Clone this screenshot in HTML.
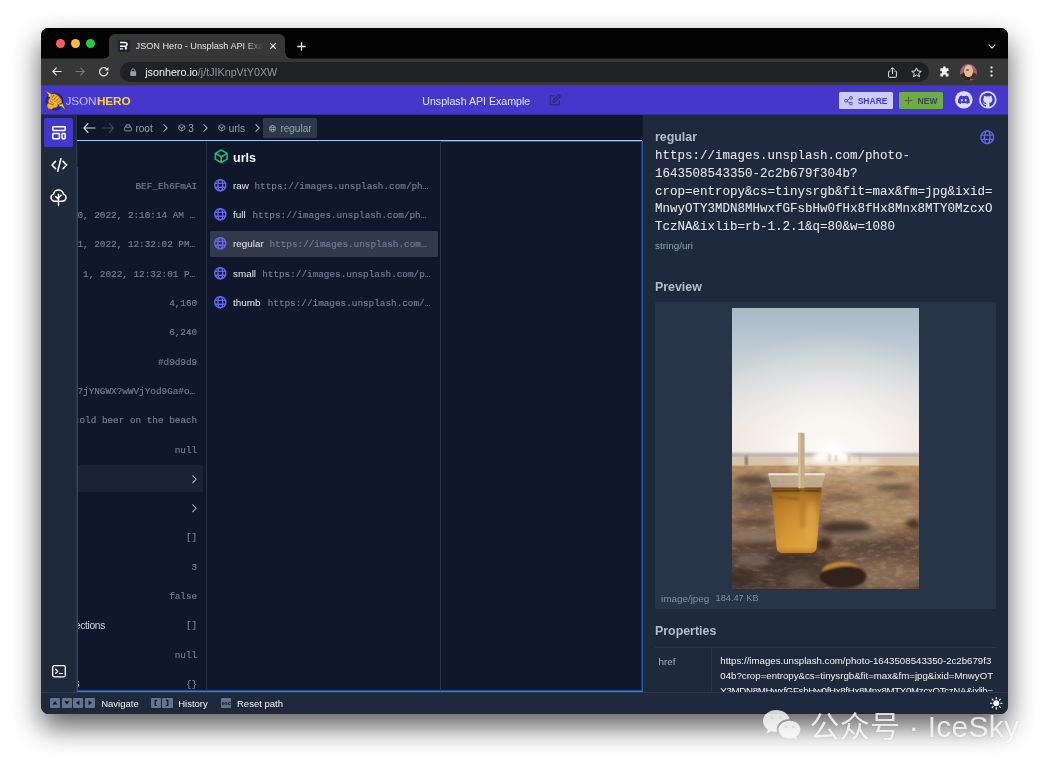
<!DOCTYPE html>
<html lang="en">
<head>
<meta charset="utf-8">
<title>JSON Hero - Unsplash API Example</title>
<style>
*{box-sizing:border-box;margin:0;padding:0}
html,body{width:1049px;height:768px;overflow:hidden;background:#fff}
body{position:relative;font-family:"Liberation Sans",sans-serif}
div,span{position:absolute}
span.i{position:static}
svg{display:block;overflow:visible;position:absolute}
#shadow{left:41px;top:28px;width:967px;height:685.8px;border-radius:7.5px;
 box-shadow:0 13px 28px rgba(0,0,0,.64)}
#win{left:41px;top:28px;width:967px;height:686px;border-radius:7.5px;overflow:hidden;background:#0f172a;will-change:transform}
#c{left:-41px;top:-28px;width:1049px;height:768px}
.t{white-space:pre;line-height:1}
.m{font-family:"Liberation Mono",monospace;-webkit-text-stroke:0.16px}
.b{font-weight:bold}
</style>
</head>
<body>
<div id="shadow"></div>
<div id="win"><div id="c">
<div style="left:41px;top:28px;width:967px;height:31px;background:#030303;"></div>
<div style="left:56.2px;top:39px;width:9px;height:9.1px;background:#fc5f57;border-radius:50%"></div>
<div style="left:70.9px;top:39px;width:9px;height:9.1px;background:#f5bd38;border-radius:50%"></div>
<div style="left:85.7px;top:39px;width:9px;height:9.1px;background:#2ac840;border-radius:50%"></div>
<div style="left:109px;top:33.5px;width:176px;height:26px;background:#373737;border-radius:6px 6px 0 0"></div>
<div style="left:118.2px;top:40.4px;width:11.4px;height:11.2px;background:#1f2431;border-radius:1.5px"></div>
<svg style="left:118.2px;top:40.4px;" width="11.4" height="11.2" viewBox="0 0 11.4 11.2"><path d="M2 2.5h5.1a1.85 1.85 0 0 1 0 3.7H2" stroke="#fff" stroke-width="1.5" fill="none"/><path d="M7.85 6.4v3.1" stroke="#fff" stroke-width="1.9" fill="none"/><path d="M2 8.95h2.9" stroke="#fff" stroke-width="1.3" fill="none"/></svg>
<div class="t " style="left:135.6px;top:42.1px;font-size:9.15px;color:#e3e3e3;width:129px;overflow:hidden;-webkit-mask-image:linear-gradient(90deg,#000 108px,transparent 128px);mask-image:linear-gradient(90deg,#000 108px,transparent 128px)">JSON Hero - Unsplash API Example</div>
<svg style="left:269.3px;top:42px;" width="8" height="8" viewBox="0 0 8 8"><path d="M1.2 1.2l5.6 5.6M6.8 1.2L1.2 6.8" stroke="#e8e8e8" stroke-width="1.15" fill="none"/></svg>
<svg style="left:296.5px;top:41.5px;" width="9" height="9" viewBox="0 0 9 9"><path d="M4.5 0.3v8.4M0.3 4.5h8.4" stroke="#f0f0f0" stroke-width="1.3" fill="none"/></svg>
<svg style="left:988px;top:43.5px;" width="8" height="5" viewBox="0 0 8 5"><path d="M0.7 0.7l3.3 3.3 3.3-3.3" stroke="#f0f0f0" stroke-width="1.2" fill="none"/></svg>
<div style="left:41px;top:58px;width:967px;height:28px;background:linear-gradient(#191919 0,#191919 1px,#373737 1px,#373737 27px,#3e388f 27px);"></div>
<div style="left:109px;top:58px;width:176px;height:1px;background:#373737;"></div>
<div style="left:103.5px;top:53px;width:5.5px;height:5.5px;background:radial-gradient(circle at 0 0,rgba(0,0,0,0) 5.1px,#373737 5.7px);"></div>
<div style="left:285px;top:53px;width:5.5px;height:5.5px;background:radial-gradient(circle at 100% 0,rgba(0,0,0,0) 5.1px,#373737 5.7px);"></div>
<svg style="left:51.7px;top:67.3px;" width="10" height="9" viewBox="0 0 10 9"><path d="M4.6 0.6L0.8 4.5l3.8 3.9M0.9 4.5h8.6" stroke="#e4e4e4" stroke-width="1.15" fill="none"/></svg>
<svg style="left:75px;top:67.3px;" width="10" height="9" viewBox="0 0 10 9"><path d="M5.4 0.6l3.8 3.9-3.8 3.9M9.1 4.5H0.5" stroke="#77787b" stroke-width="1.15" fill="none"/></svg>
<svg style="left:98.3px;top:66px;" width="11.6" height="11.6" viewBox="0 0 11 11"><path d="M9.3 5.6A3.9 3.9 0 1 1 8.2 2.7" stroke="#e4e4e4" stroke-width="1.2" fill="none"/><path d="M9.9 0.9v3.3H6.6z" fill="#e4e4e4"/></svg>
<div style="left:120px;top:62px;width:809px;height:20px;background:#202124;border-radius:10px"></div>
<svg style="left:129.8px;top:67.6px;" width="6.4" height="8.4" viewBox="0 0 7 9"><rect x="0.3" y="3.6" width="6.4" height="5.1" rx="0.8" fill="#9aa0a6"/><path d="M1.7 3.8V2.6a1.8 1.8 0 0 1 3.6 0v1.2" stroke="#9aa0a6" stroke-width="1" fill="none"/></svg>
<div class="t " style="left:145.2px;top:66.7px;font-size:10.75px;color:#f1f3f4;">jsonhero.io<span class="i" style="color:#92969b">/j/tJIKnpVtY0XW</span></div>
<svg style="left:887.5px;top:66.5px;" width="9" height="11" viewBox="0 0 9 11"><path d="M2.6 4.1H1.2a.6.6 0 0 0-.6.6v5a.6.6 0 0 0 .6.6h6.6a.6.6 0 0 0 .6-.6v-5a.6.6 0 0 0-.6-.6H6.4M4.5 7V0.9M2.6 2.6l1.9-1.9 1.9 1.9" stroke="#e4e4e4" stroke-width="1" fill="none"/></svg>
<svg style="left:910.5px;top:66.5px;" width="11" height="11" viewBox="0 0 11 11"><path d="M5.5 0.9l1.4 3.1 3.4.3-2.6 2.2.8 3.3-3-1.8-3 1.8.8-3.3L.7 4.3l3.4-.3z" stroke="#e4e4e4" stroke-width="1" fill="none" stroke-linejoin="round"/></svg>
<svg style="left:938.6px;top:66.3px;" width="11" height="11" viewBox="0 0 11 11"><path d="M4.1 1.6a1.3 1.3 0 0 1 2.6 0V2.2h2.2a.6.6 0 0 1 .6.6V4.9h-.6a1.35 1.35 0 0 0 0 2.7h.6v2.2a.6.6 0 0 1-.6.6H6.8v-.6a1.35 1.35 0 0 0-2.7 0v.6H1.9a.6.6 0 0 1-.6-.6V7.6h.6a1.35 1.35 0 0 0 0-2.7h-.6V2.8a.6.6 0 0 1 .6-.6h2.2z" fill="#f1f1f1"/></svg>
<div style="left:959.8px;top:63.5px;width:17.2px;height:17.2px;background:#9c5f86;border-radius:50%;overflow:hidden"><div style="left:-1px;top:9.5px;width:9.5px;height:10px;border-radius:60% 40% 0 0;background:#3d2620;transform:rotate(-18deg)"></div><div style="left:10.5px;top:9px;width:7px;height:6px;border-radius:40% 60% 50% 0;background:#4a2e26"></div><div style="left:4.6px;top:1.6px;width:8.2px;height:12.4px;border-radius:48% 48% 46% 46%;background:#e0b98c"></div><div style="left:6.6px;top:5.3px;width:3px;height:2.6px;border-radius:50%;background:#6b4a3c;opacity:.8"></div><div style="left:7.2px;top:13px;width:3.4px;height:3.6px;border-radius:40%;background:#2a1a1c"></div></div>
<svg style="left:990px;top:66.2px;" width="3" height="11" viewBox="0 0 3 11"><rect x="0.45" y="0.4" width="2.1" height="2.1" rx="0.7" fill="#f2f2f2"/><rect x="0.45" y="4.45" width="2.1" height="2.1" rx="0.7" fill="#f2f2f2"/><rect x="0.45" y="8.5" width="2.1" height="2.1" rx="0.7" fill="#f2f2f2"/></svg>
<div style="left:41px;top:86px;width:967px;height:29px;background:linear-gradient(#4338ca 0,#4338ca 28px,#332f9a 28px);"></div>
<svg style="left:42px;top:86px;" width="30" height="30" viewBox="0 0 30 30"><circle cx="12.5" cy="15.5" r="8.5" fill="#342c9e" stroke="#23207a" stroke-width="1.1"/><path d="M3 3.7L8.3 7.5l1.7.2-.3 4.2-3.8-1.4.7-1.4z" fill="#f8cf2e" stroke="#2a2470" stroke-width="0.5" stroke-linejoin="round"/><path d="M23.9 24.7L20.4 17l-1.7 1.6-1.7-1.4.2 3.5 2.4-.2z" fill="#f8cf2e" stroke="#2a2470" stroke-width="0.5" stroke-linejoin="round"/><path d="M10.2 8.3l2.7-.3 3.6 2.3 3 4.2v2l-3.9 2.3-.4 1.9-4.3 1.2-1.5 1.5-3.5-1.5-.9-3.1 1.9-1.6-.4-2.7 1.2-2z" fill="#f4b52e" stroke="#d0881c" stroke-width="0.6" stroke-linejoin="round"/><path d="M9.6 12.2l2.5-3.1M11.6 14l2.9-3.4M13.6 15.6l2.9-3M15.5 17.1l2.9-2.5M7.3 17.5l4.2 1.3M8.2 14.8l3 2.5" stroke="#8a5516" stroke-width="0.8" fill="none" stroke-linecap="round"/><circle cx="10.5" cy="13.5" r="0.5" fill="#5aa05a"/><circle cx="12.5" cy="15.4" r="0.5" fill="#5aa05a"/><circle cx="15.4" cy="18.4" r="0.5" fill="#5aa05a"/></svg>
<div class="t " style="left:65.6px;top:96.1px;font-size:11.8px;color:#f4f5ff;letter-spacing:-0.15px;-webkit-text-stroke:0.3px #4338ca">JSON</div>
<div class="t b" style="left:96.9px;top:96.1px;font-size:11.8px;color:#f7d23e;letter-spacing:-0.1px">HERO</div>
<div class="t " style="left:422.3px;top:95.9px;font-size:10.62px;color:#dfe4ff;">Unsplash API Example</div>
<svg style="left:548.8px;top:94.2px;" width="12" height="12" viewBox="0 0 12 12"><path d="M5.2 1.8H2.2a1 1 0 0 0-1 1v7a1 1 0 0 0 1 1h7a1 1 0 0 0 1-1V6.8" stroke="#2c2a7c" stroke-width="1.35" fill="none" stroke-linecap="round"/><path d="M9.3 1.1a1.13 1.13 0 0 1 1.6 1.6L6.2 7.4l-2.1.5.5-2.1z" stroke="#2c2a7c" stroke-width="1.35" fill="none" stroke-linejoin="round"/></svg>
<div style="left:839.4px;top:91.7px;width:53.7px;height:17.5px;background:#c9cdf6;border-radius:1.5px"></div>
<svg style="left:843.7px;top:95.7px;" width="9" height="9.5" viewBox="0 0 9 9.5"><circle cx="7" cy="1.9" r="1.4" fill="none" stroke="#4338ca" stroke-width="0.9"/><circle cx="2" cy="4.75" r="1.4" fill="none" stroke="#4338ca" stroke-width="0.9"/><circle cx="7" cy="7.6" r="1.4" fill="none" stroke="#4338ca" stroke-width="0.9"/><path d="M3.25 4.1l2.5-1.5M3.25 5.4l2.5 1.5" stroke="#4338ca" stroke-width="0.9"/></svg>
<div class="t b" style="left:857.7px;top:96.9px;font-size:8.5px;color:#4338ca;">SHARE</div>
<div style="left:899.1px;top:91.7px;width:44.1px;height:17.5px;background:#6fac42;border-radius:1.5px"></div>
<svg style="left:903.6px;top:96px;" width="9" height="9" viewBox="0 0 9 9"><path d="M4.5 0.5v8M0.5 4.5h8" stroke="#3f5e3a" stroke-width="0.9" fill="none"/></svg>
<div class="t b" style="left:917.4px;top:96.9px;font-size:8.5px;color:#33495c;letter-spacing:0.1px">NEW</div>
<svg style="left:955.3px;top:91.4px;" width="17.6" height="17.6" viewBox="0 0 17.6 17.6"><circle cx="8.8" cy="8.8" r="8.8" fill="#dadcf8"/><path d="M12.9 5.3a9 9 0 0 0-2.3-.7l-.3.6a8.4 8.4 0 0 0-3 0l-.3-.6a9 9 0 0 0-2.3.7C3.2 7.5 2.8 9.6 3 11.7a9 9 0 0 0 2.8 1.4l.6-1-.9-.45.2-.17a6.5 6.5 0 0 0 6.2 0l.2.17-.9.45.6 1a9 9 0 0 0 2.8-1.4c.25-2.4-.4-4.5-1.7-6.4zM6.9 10.4c-.55 0-1-.5-1-1.15s.44-1.15 1-1.15 1.01.52 1 1.15c0 .64-.44 1.15-1 1.15zm3.8 0c-.55 0-1-.5-1-1.15s.44-1.15 1-1.15 1.01.52 1 1.15c0 .64-.44 1.15-1 1.15z" fill="#4338ca"/></svg>
<svg style="left:978.5px;top:91.4px;" width="17.6" height="17.6" viewBox="0 0 17.6 17.6"><circle cx="8.8" cy="8.8" r="8.8" fill="#dadcf8"/><path d="M8.8 1.7a7.1 7.1 0 0 0-2.25 13.84c.36.06.49-.15.49-.34v-1.2c-1.98.43-2.4-.95-2.4-.95-.32-.82-.79-1.04-.79-1.04-.64-.44.05-.43.05-.43.71.05 1.09.73 1.09.73.63 1.09 1.66.77 2.07.59.06-.46.25-.77.45-.95-1.58-.18-3.24-.79-3.24-3.51 0-.78.28-1.41.73-1.91-.07-.18-.32-.9.07-1.88 0 0 .6-.19 1.95.73a6.8 6.8 0 0 1 3.56 0c1.36-.92 1.95-.73 1.95-.73.39.98.14 1.7.07 1.88.46.5.73 1.13.73 1.91 0 2.73-1.66 3.33-3.25 3.5.26.22.48.65.48 1.31v1.95c0 .19.13.41.49.34A7.1 7.1 0 0 0 8.8 1.7z" fill="#4338ca"/></svg>
<div style="left:41px;top:115px;width:35.5px;height:577px;background:#1e293b;"></div>
<div style="left:76px;top:115px;width:1px;height:577px;background:#2b374a;"></div>
<div style="left:44px;top:118.3px;width:29.2px;height:28.9px;background:#4338ca;border-radius:2px"></div>
<svg style="left:52px;top:125.7px;" width="14" height="13.6" viewBox="0 0 14 13.6"><rect x="0.85" y="0.85" width="12.3" height="3.7" rx="0.6" fill="none" stroke="#fff" stroke-width="1.5"/><rect x="0.85" y="7.4" width="6.5" height="5.3" rx="0.6" fill="none" stroke="#fff" stroke-width="1.5"/><rect x="10.05" y="7.4" width="3.1" height="5.3" rx="0.6" fill="none" stroke="#fff" stroke-width="1.5"/></svg>
<svg style="left:50.9px;top:158px;" width="16.6" height="14" viewBox="0 0 16.6 14"><path d="M4.5 3.4L1 7l3.5 3.6M12.1 3.4L15.6 7l-3.5 3.6M9.9 0.8L6.7 13.2" stroke="#fff" stroke-width="1.55" fill="none" stroke-linecap="round" stroke-linejoin="round"/></svg>
<svg style="left:50.4px;top:188px;" width="17" height="18.5" viewBox="0 0 17 18.5"><path d="M8.5 17.6V6.3M8.5 11.2L5.7 8.6M8.5 9.6l2.6-2.4" stroke="#fff" stroke-width="1.45" fill="none" stroke-linecap="round" stroke-linejoin="round"/><path d="M5.2 13.3H4.7a3.7 3.7 0 0 1-1.2-7.2A5.1 5.1 0 0 1 13.5 6.1a3.7 3.7 0 0 1-1.2 7.2h-.5z" stroke="#fff" stroke-width="1.45" fill="none" stroke-linejoin="round"/></svg>
<svg style="left:51.5px;top:665px;" width="14" height="12.5" viewBox="0 0 14 12.5"><rect x="0.7" y="0.7" width="12.6" height="11.1" rx="1.6" fill="none" stroke="#fff" stroke-width="1.3"/><path d="M3.6 4.2l2.3 2-2.3 2M7.3 8.5h3" stroke="#fff" stroke-width="1.2" fill="none" stroke-linecap="round" stroke-linejoin="round"/></svg>
<svg style="left:82.9px;top:122.7px;" width="12.5" height="10" viewBox="0 0 12.5 10"><path d="M5 0.7L0.9 5l4.1 4.3M1.1 5h10.8" stroke="#cbd5e1" stroke-width="1.2" fill="none" stroke-linecap="round" stroke-linejoin="round"/></svg>
<svg style="left:102.2px;top:122.7px;" width="12.5" height="10" viewBox="0 0 12.5 10"><path d="M7.5 0.7l4.1 4.3-4.1 4.3M11.4 5H0.6" stroke="#3d4a5e" stroke-width="1.2" fill="none" stroke-linecap="round" stroke-linejoin="round"/></svg>
<svg style="left:124.2px;top:124.3px;" width="8" height="7.5" viewBox="0 0 8 7.5"><path d="M1.6 3.2L2.3 0.9h3.4l.7 2.3" stroke="#94a3b8" stroke-width="0.85" fill="none" stroke-linejoin="round"/><rect x="0.6" y="3.2" width="6.8" height="3.7" rx="0.7" stroke="#94a3b8" stroke-width="0.85" fill="none"/></svg>
<div class="t " style="left:135.4px;top:123.7px;font-size:10.1px;color:#94a3b8;">root</div>
<svg style="left:162.6px;top:124px;" width="5" height="8" viewBox="0 0 5 8"><path d="M0.8 0.7L4.2 4 0.8 7.3" stroke="#94a3b8" stroke-width="1.05" fill="none" stroke-linecap="round" stroke-linejoin="round"/></svg>
<svg style="left:177.5px;top:124.3px;" width="7.5" height="7.5" viewBox="0 0 10 10"><path d="M5 0.7L9 3v4L5 9.3 1 7V3zM1 3l4 2.3L9 3M5 5.3v4" stroke="#94a3b8" stroke-width="1.066" fill="none" stroke-linejoin="round"/></svg>
<div class="t " style="left:188.3px;top:123.7px;font-size:10.1px;color:#94a3b8;">3</div>
<svg style="left:203.2px;top:124px;" width="5" height="8" viewBox="0 0 5 8"><path d="M0.8 0.7L4.2 4 0.8 7.3" stroke="#94a3b8" stroke-width="1.05" fill="none" stroke-linecap="round" stroke-linejoin="round"/></svg>
<svg style="left:217.5px;top:124.3px;" width="7.5" height="7.5" viewBox="0 0 10 10"><path d="M5 0.7L9 3v4L5 9.3 1 7V3zM1 3l4 2.3L9 3M5 5.3v4" stroke="#94a3b8" stroke-width="1.066" fill="none" stroke-linejoin="round"/></svg>
<div class="t " style="left:228.8px;top:123.7px;font-size:10.1px;color:#94a3b8;">urls</div>
<svg style="left:254.5px;top:124px;" width="5" height="8" viewBox="0 0 5 8"><path d="M0.8 0.7L4.2 4 0.8 7.3" stroke="#94a3b8" stroke-width="1.05" fill="none" stroke-linecap="round" stroke-linejoin="round"/></svg>
<div style="left:262.5px;top:118px;width:54.3px;height:20px;background:#2d394b;border-radius:2px"></div>
<svg style="left:269.1px;top:124.6px;" width="7" height="7" viewBox="0 0 12 12"><circle cx="6" cy="6" r="5.3" stroke="#94a3b8" stroke-width="1.285" fill="none"/><ellipse cx="6" cy="6" rx="2.3" ry="5.3" stroke="#94a3b8" stroke-width="1.285" fill="none"/><path d="M0.9 4.2h10.2M0.9 7.8h10.2" stroke="#94a3b8" stroke-width="1.285" fill="none"/></svg>
<div class="t " style="left:280.4px;top:123.7px;font-size:10px;color:#94a3b8;">regular</div>
<div style="left:77px;top:140px;width:565px;height:1px;background:#a9c5f3;"></div>
<div style="left:77px;top:141px;width:130px;height:1px;background:#071f52;"></div>
<div style="left:207px;top:141px;width:234px;height:1px;background:#071f52;"></div>
<div style="left:441px;top:141px;width:201px;height:1px;background:#0a5cc9;"></div>
<div style="left:77px;top:142px;width:1px;height:25px;background:#14254a;"></div>
<div style="left:77px;top:167px;width:1px;height:523px;background:#1b4690;"></div>
<div style="left:641px;top:141px;width:1px;height:551px;background:#173a78;"></div>
<div style="left:642px;top:141px;width:1px;height:551px;background:#2c5ba6;"></div>
<div style="left:77px;top:690px;width:566px;height:1px;background:#1e4f9f;"></div>
<div style="left:77px;top:691px;width:566px;height:1px;background:#3478e0;"></div>
<div style="left:206px;top:142px;width:1px;height:548.5px;background:#28344a;"></div>
<div style="left:440px;top:142px;width:1px;height:548.5px;background:#28344a;"></div>
<div style="left:78px;top:465px;width:124.8px;height:26.5px;background:#1a2336;border-radius:0 2px 2px 0"></div>
<div style="left:78px;top:142px;width:128px;height:548px;overflow:hidden">
<div class="t m" style="right:8.8px;top:40.3px;font-size:9.35px;color:#727e94">BEF_Eh6FmAI</div>
<div class="t m" style="right:10.8px;top:69.3px;font-size:9.35px;color:#727e94">0, 2022, 2:10:14 AM …</div>
<div class="t m" style="right:10.8px;top:98.3px;font-size:9.35px;color:#727e94">1, 2022, 12:32:02 PM…</div>
<div class="t m" style="right:10.8px;top:127.8px;font-size:9.35px;color:#727e94">1, 2022, 12:32:01 P…</div>
<div class="t m" style="right:8.8px;top:157.3px;font-size:9.35px;color:#727e94">4,160</div>
<div class="t m" style="right:8.8px;top:186.3px;font-size:9.35px;color:#727e94">6,240</div>
<div class="t m" style="right:8.8px;top:215.8px;font-size:9.35px;color:#727e94">#d9d9d9</div>
<div class="t m" style="right:10.8px;top:245.3px;font-size:9.35px;color:#727e94">7jYNGWX?wWVjYod9Ga#o…</div>
<div class="t m" style="right:8.8px;top:274.3px;font-size:9.35px;color:#727e94">cold beer on the beach</div>
<div class="t m" style="right:8.8px;top:303.8px;font-size:9.35px;color:#727e94">null</div>
<svg style="left:113.699px;top:332.5px" width="5" height="8.5" viewBox="0 0 5 8.5"><path d="M0.7 0.7l3.5 3.55-3.5 3.55" stroke="#aab4c3" stroke-width="1.05" fill="none" stroke-linecap="round" stroke-linejoin="round"/></svg>
<svg style="left:113.699px;top:362px" width="5" height="8.5" viewBox="0 0 5 8.5"><path d="M0.7 0.7l3.5 3.55-3.5 3.55" stroke="#aab4c3" stroke-width="1.05" fill="none" stroke-linecap="round" stroke-linejoin="round"/></svg>
<div class="t m" style="right:8.8px;top:391.299px;font-size:9.35px;color:#727e94">[]</div>
<div class="t m" style="right:8.8px;top:420.799px;font-size:9.35px;color:#727e94">3</div>
<div class="t m" style="right:8.8px;top:450.299px;font-size:9.35px;color:#727e94">false</div>
<div class="t m" style="right:8.8px;top:479.299px;font-size:9.35px;color:#727e94">[]</div>
<div class="t m" style="right:8.8px;top:508.799px;font-size:9.35px;color:#727e94">null</div>
<div class="t m" style="right:8.8px;top:538.3px;font-size:9.35px;color:#727e94">{}</div>
<div class="t" style="right:101px;top:478.6px;font-size:10.2px;letter-spacing:-0.3px;color:#cbd5e1">collections</div>
<div class="t" style="right:126.4px;top:537.4px;font-size:10.3px;color:#cbd5e1">links</div>
</div>
<svg style="left:214px;top:149.3px;" width="14.5" height="14.5" viewBox="0 0 12 12"><path d="M6 0.8L10.9 3.6v4.8L6 11.2 1.1 8.4V3.6zM1.1 3.6L6 6.4l4.9-2.8M6 6.4v4.8" stroke="#22b573" stroke-width="1.35" fill="none" stroke-linejoin="round"/></svg>
<div class="t b" style="left:233px;top:151.8px;font-size:12.5px;color:#f1f5f9;">urls</div>
<div style="left:210px;top:231.3px;width:227.5px;height:25.7px;background:#303a4a;border-radius:2px"></div>
<svg style="left:213.5px;top:179.1px;" width="12.6" height="12.6" viewBox="0 0 12 12"><circle cx="6" cy="6" r="5.3" stroke="#6366f1" stroke-width="1.333" fill="none"/><ellipse cx="6" cy="6" rx="2.3" ry="5.3" stroke="#6366f1" stroke-width="1.333" fill="none"/><path d="M0.9 4.2h10.2M0.9 7.8h10.2" stroke="#6366f1" stroke-width="1.333" fill="none"/></svg>
<div class="t " style="left:233px;top:181.4px;font-size:9.9px;color:#e6ebf2;">raw</div>
<div class="t m" style="left:254.5px;top:182.3px;font-size:9.35px;color:#727e94;">https://images.unsplash.com/ph…</div>
<svg style="left:213.5px;top:208.1px;" width="12.6" height="12.6" viewBox="0 0 12 12"><circle cx="6" cy="6" r="5.3" stroke="#6366f1" stroke-width="1.333" fill="none"/><ellipse cx="6" cy="6" rx="2.3" ry="5.3" stroke="#6366f1" stroke-width="1.333" fill="none"/><path d="M0.9 4.2h10.2M0.9 7.8h10.2" stroke="#6366f1" stroke-width="1.333" fill="none"/></svg>
<div class="t " style="left:233px;top:210.4px;font-size:9.9px;color:#e6ebf2;">full</div>
<div class="t m" style="left:252.5px;top:211.3px;font-size:9.35px;color:#727e94;">https://images.unsplash.com/ph…</div>
<svg style="left:213.5px;top:237.1px;" width="12.6" height="12.6" viewBox="0 0 12 12"><circle cx="6" cy="6" r="5.3" stroke="#6366f1" stroke-width="1.333" fill="none"/><ellipse cx="6" cy="6" rx="2.3" ry="5.3" stroke="#6366f1" stroke-width="1.333" fill="none"/><path d="M0.9 4.2h10.2M0.9 7.8h10.2" stroke="#6366f1" stroke-width="1.333" fill="none"/></svg>
<div class="t " style="left:233px;top:239.4px;font-size:9.9px;color:#e6ebf2;">regular</div>
<div class="t m" style="left:269.5px;top:240.3px;font-size:9.35px;color:#727e94;">https://images.unsplash.com…</div>
<svg style="left:213.5px;top:266.6px;" width="12.6" height="12.6" viewBox="0 0 12 12"><circle cx="6" cy="6" r="5.3" stroke="#6366f1" stroke-width="1.333" fill="none"/><ellipse cx="6" cy="6" rx="2.3" ry="5.3" stroke="#6366f1" stroke-width="1.333" fill="none"/><path d="M0.9 4.2h10.2M0.9 7.8h10.2" stroke="#6366f1" stroke-width="1.333" fill="none"/></svg>
<div class="t " style="left:233px;top:268.9px;font-size:9.9px;color:#e6ebf2;">small</div>
<div class="t m" style="left:262.2px;top:269.8px;font-size:9.35px;color:#727e94;">https://images.unsplash.com/p…</div>
<svg style="left:213.5px;top:296.1px;" width="12.6" height="12.6" viewBox="0 0 12 12"><circle cx="6" cy="6" r="5.3" stroke="#6366f1" stroke-width="1.333" fill="none"/><ellipse cx="6" cy="6" rx="2.3" ry="5.3" stroke="#6366f1" stroke-width="1.333" fill="none"/><path d="M0.9 4.2h10.2M0.9 7.8h10.2" stroke="#6366f1" stroke-width="1.333" fill="none"/></svg>
<div class="t " style="left:233px;top:298.4px;font-size:9.9px;color:#e6ebf2;">thumb</div>
<div class="t m" style="left:267.7px;top:299.3px;font-size:9.35px;color:#727e94;">https://images.unsplash.com/…</div>
<div style="left:41px;top:692px;width:967px;height:22px;background:linear-gradient(#2c3950 0,#2c3950 1px,#1e293b 1px);"></div>
<div style="left:49.7px;top:698.2px;width:10.3px;height:10px;background:#64748b;border-radius:1px"></div>
<svg style="left:49.9px;top:697.8px;" width="9.8" height="9.6" viewBox="0 0 9.8 9.6"><path d="M2.4 6.5L4.9 3.2l2.5 3.3z" fill="#0b1220"/></svg>
<div style="left:61.5px;top:698.2px;width:10.3px;height:10px;background:#64748b;border-radius:1px"></div>
<svg style="left:61.7px;top:697.8px;" width="9.8" height="9.6" viewBox="0 0 9.8 9.6"><path d="M2.4 3.3L4.9 6.6l2.5-3.3z" fill="#0b1220"/></svg>
<div style="left:73.2px;top:698.2px;width:10.3px;height:10px;background:#64748b;border-radius:1px"></div>
<svg style="left:73.4px;top:697.8px;" width="9.8" height="9.6" viewBox="0 0 9.8 9.6"><path d="M6.4 2.3L3.2 4.8l3.2 2.5z" fill="#0b1220"/></svg>
<div style="left:84.9px;top:698.2px;width:10.3px;height:10px;background:#64748b;border-radius:1px"></div>
<svg style="left:85.1px;top:697.8px;" width="9.8" height="9.6" viewBox="0 0 9.8 9.6"><path d="M3.6 2.3l3.2 2.5-3.2 2.5z" fill="#0b1220"/></svg>
<div class="t " style="left:101.2px;top:698.5px;font-size:9.5px;color:#f1f5f9;">Navigate</div>
<div style="left:150.7px;top:698.2px;width:10.4px;height:10px;background:#64748b;border-radius:1px"></div>
<svg style="left:150.899px;top:697.8px;" width="9.8" height="9.6" viewBox="0 0 9.8 9.6"><path d="M6.1 2.3H4.2v5.2h1.9" stroke="#0b1220" stroke-width="1.2" fill="none"/></svg>
<div style="left:162.2px;top:698.2px;width:10.4px;height:10px;background:#64748b;border-radius:1px"></div>
<svg style="left:162.399px;top:697.8px;" width="9.8" height="9.6" viewBox="0 0 9.8 9.6"><path d="M3.9 2.3h1.9v5.2H3.9" stroke="#0b1220" stroke-width="1.2" fill="none"/></svg>
<div class="t " style="left:178.2px;top:698.5px;font-size:9.5px;color:#f1f5f9;">History</div>
<div style="left:220.8px;top:698.2px;width:10.4px;height:10px;background:#64748b;border-radius:1px"></div>
<div class="t b" style="left:221.8px;top:700.8px;font-size:5.7px;color:#0b1220;letter-spacing:-0.15px">esc</div>
<div class="t " style="left:237px;top:698.5px;font-size:9.5px;color:#f1f5f9;">Reset path</div>
<svg style="left:989.5px;top:697.2px;" width="12.5" height="12.5" viewBox="0 0 12.5 12.5"><circle cx="6.25" cy="6.25" r="2.9" fill="#fff"/><path d="M6.25 0.5v1.3M6.25 10.7v1.3M0.5 6.25h1.3M10.7 6.25h1.3M2.2 2.2l.9.9M9.4 9.4l.9.9M2.2 10.3l.9-.9M9.4 3.1l.9-.9" stroke="#fff" stroke-width="1.2" stroke-linecap="round"/></svg>
<div style="left:643px;top:115px;width:365px;height:577px;background:#1e293b;"></div>
<div style="left:642px;top:115px;width:366px;height:577px;overflow:hidden">
<div class="t b" style="left:13px;top:16.3px;font-size:12.4px;color:#b4bfcd;">regular</div>
<svg style="left:338.299px;top:14.599px" width="14.5" height="14.5" viewBox="0 0 12 12"><circle cx="6" cy="6" r="5.3" stroke="#6366f1" stroke-width="1.05" fill="none"/><ellipse cx="6" cy="6" rx="2.3" ry="5.3" stroke="#6366f1" stroke-width="1.05" fill="none"/><path d="M0.9 4.2h10.2M0.9 7.8h10.2" stroke="#6366f1" stroke-width="1.05" fill="none"/></svg>
<div class="t m" style="left:13px;top:35.2px;font-size:12.5px;color:#e2e8f0;-webkit-text-stroke:0.05px">https://images.unsplash.com/photo-</div>
<div class="t m" style="left:13px;top:52.85px;font-size:12.5px;color:#e2e8f0;-webkit-text-stroke:0.05px">1643508543350-2c2b679f304b?</div>
<div class="t m" style="left:13px;top:70.5px;font-size:12.5px;color:#e2e8f0;-webkit-text-stroke:0.05px">crop=entropy&amp;cs=tinysrgb&amp;fit=max&amp;fm=jpg&amp;ixid=</div>
<div class="t m" style="left:13px;top:88.15px;font-size:12.5px;color:#e2e8f0;-webkit-text-stroke:0.05px">MnwyOTY3MDN8MHwxfGFsbHw0fHx8fHx8Mnx8MTY0MzcxO</div>
<div class="t m" style="left:13px;top:105.8px;font-size:12.5px;color:#e2e8f0;-webkit-text-stroke:0.05px">TczNA&amp;ixlib=rb-1.2.1&amp;q=80&amp;w=1080</div>
<div class="t " style="left:13px;top:125.5px;font-size:9.9px;color:#94a3b8;">string/uri</div>
<div class="t b" style="left:13px;top:165.9px;font-size:12.4px;color:#b4bfcd;">Preview</div>
<div style="left:13px;top:187px;width:341px;height:307px;background:#283548;border-radius:1.5px"></div>
<svg style="left:90px;top:193px" width="187" height="281" viewBox="0 0 187 281">
<defs>
<linearGradient id="sky" x1="0" y1="0" x2="0" y2="1"><stop offset="0" stop-color="#a9b8c6"/><stop offset="0.22" stop-color="#bcc8d1"/><stop offset="0.45" stop-color="#d2d9dd"/><stop offset="0.65" stop-color="#e3e3e1"/><stop offset="0.85" stop-color="#ede3d6"/><stop offset="1" stop-color="#eed8bd"/></linearGradient>
<radialGradient id="sun" cx="0.5" cy="0.5" r="0.5"><stop offset="0" stop-color="#fff" stop-opacity="1"/><stop offset="0.3" stop-color="#fdfbf8" stop-opacity="0.9"/><stop offset="0.65" stop-color="#f6f1ec" stop-opacity="0.45"/><stop offset="1" stop-color="#f0e8e0" stop-opacity="0"/></radialGradient>
<linearGradient id="sand" x1="0" y1="0" x2="0" y2="1"><stop offset="0" stop-color="#c49a6c"/><stop offset="0.1" stop-color="#b08860"/><stop offset="0.35" stop-color="#977252"/><stop offset="0.65" stop-color="#775842"/><stop offset="1" stop-color="#594234"/></linearGradient>
<linearGradient id="liq" x1="0" y1="0" x2="1" y2="0"><stop offset="0" stop-color="#b87a26"/><stop offset="0.3" stop-color="#cc8f32"/><stop offset="0.7" stop-color="#d59a3a"/><stop offset="1" stop-color="#bd802c"/></linearGradient>
<linearGradient id="liqv" x1="0" y1="0" x2="0" y2="1"><stop offset="0" stop-color="#5e3a16" stop-opacity="0.8"/><stop offset="0.12" stop-color="#8a5618" stop-opacity="0.55"/><stop offset="0.4" stop-color="#b87826" stop-opacity="0.25"/><stop offset="0.7" stop-color="#e8b048" stop-opacity="0.25"/><stop offset="0.9" stop-color="#f0b848" stop-opacity="0.35"/><stop offset="1" stop-color="#a8661a" stop-opacity="0.55"/></linearGradient>
<filter id="b1" x="-30%" y="-30%" width="160%" height="160%"><feGaussianBlur stdDeviation="1.1"/></filter>
<filter id="b2" x="-30%" y="-30%" width="160%" height="160%"><feGaussianBlur stdDeviation="2.4"/></filter>
<filter id="b4" x="-40%" y="-40%" width="180%" height="180%"><feGaussianBlur stdDeviation="5"/></filter>
<filter id="grain" x="0" y="0" width="100%" height="100%"><feTurbulence type="fractalNoise" baseFrequency="0.09 0.22" numOctaves="4" seed="11"/><feColorMatrix type="matrix" values="0 0 0 0 0.17  0 0 0 0 0.12  0 0 0 0 0.09  1.6 1.2 0 0 -1.05"/></filter>
<filter id="grainl" x="0" y="0" width="100%" height="100%"><feTurbulence type="fractalNoise" baseFrequency="0.11 0.26" numOctaves="4" seed="29"/><feColorMatrix type="matrix" values="0 0 0 0 0.72  0 0 0 0 0.58  0 0 0 0 0.45  1.5 1.2 0 0 -1.3"/></filter>
<clipPath id="pc"><rect width="187" height="281"/></clipPath>
</defs>
<g clip-path="url(#pc)">
<rect width="187" height="160" fill="url(#sky)"/>
<ellipse cx="100" cy="152" rx="150" ry="128" fill="url(#sun)"/>
<ellipse cx="100" cy="148" rx="78" ry="70" fill="url(#sun)"/>
<ellipse cx="100" cy="146" rx="40" ry="36" fill="url(#sun)"/>
<rect x="-5" y="144.8" width="197" height="5.2" fill="#a9a3a6" opacity="0.75" filter="url(#b1)"/>
<rect x="0" y="150" width="187" height="8.5" fill="#d9c4aa"/>
<ellipse cx="100" cy="150" rx="19" ry="9" fill="#fff" filter="url(#b2)"/>
<ellipse cx="100" cy="153.5" rx="48" ry="4" fill="#fcf5ec" opacity="0.85" filter="url(#b2)"/>
<rect x="13" y="148" width="2.6" height="9.5" rx="1" fill="#6e625f" filter="url(#b1)" opacity="0.9"/>
<g fill="#c9a98e" opacity="0.75" filter="url(#b1)"><rect x="96.5" y="146" width="2" height="8"/><rect x="103" y="147" width="1.8" height="7"/><rect x="116" y="147" width="1.8" height="7"/><rect x="127" y="147" width="1.8" height="7"/></g>
<rect x="0" y="157.5" width="187" height="124" fill="url(#sand)"/>
<ellipse cx="104" cy="161" rx="46" ry="6" fill="#f0d9b8" opacity="0.85" filter="url(#b2)"/>
<ellipse cx="108" cy="168" rx="22" ry="7" fill="#e6c8a0" opacity="0.6" filter="url(#b2)"/>
<g filter="url(#b4)">
<ellipse cx="142" cy="202" rx="48" ry="20" fill="#b3916c" opacity="0.9"/>
<ellipse cx="150" cy="268" rx="44" ry="14" fill="#8f7158" opacity="0.8"/>
<ellipse cx="60" cy="170" rx="60" ry="8" fill="#b08c64" opacity="0.6"/>
<ellipse cx="130" cy="172" rx="50" ry="8" fill="#b8966f" opacity="0.7"/>
<ellipse cx="30" cy="188" rx="34" ry="16" fill="#6a594b" opacity="0.6"/>
<ellipse cx="25" cy="262" rx="42" ry="22" fill="#43342b" opacity="0.8"/>
<ellipse cx="70" cy="256" rx="40" ry="12" fill="#3a2c24" opacity="0.6"/>
<ellipse cx="150" cy="238" rx="44" ry="10" fill="#4f3e32" opacity="0.7"/>
<ellipse cx="155" cy="266" rx="34" ry="12" fill="#8a6f58" opacity="0.6"/>
</g>
<rect x="0" y="158" width="187" height="123" filter="url(#grain)" opacity="0.3"/>
<rect x="0" y="164" width="187" height="117" filter="url(#grainl)" opacity="0.3"/>
<g filter="url(#b2)">
<ellipse cx="150" cy="171" rx="36" ry="4" fill="#c0a68a" opacity="0.5"/>
<ellipse cx="20" cy="172" rx="17" ry="4.5" fill="#4d3f36" opacity="0.8"/>
<ellipse cx="26" cy="191" rx="19" ry="5" fill="#55463b" opacity="0.7"/>
<ellipse cx="152" cy="167" rx="15" ry="2.2" fill="#5a4a3e" opacity="0.7"/>
<ellipse cx="162" cy="179" rx="19" ry="3" fill="#4e4036" opacity="0.8"/>
<ellipse cx="170" cy="188" rx="13" ry="2.2" fill="#4e4036" opacity="0.55"/>
<ellipse cx="112" cy="190" rx="19" ry="3" fill="#5a4a3e" opacity="0.65"/>
<ellipse cx="114" cy="219.5" rx="25" ry="6.5" fill="#3e3129" opacity="0.9"/>
<ellipse cx="181" cy="216" rx="7" ry="4" fill="#2e241e" opacity="0.9"/>
<ellipse cx="22" cy="214" rx="19" ry="3.5" fill="#4a3c33" opacity="0.65"/>
<ellipse cx="20" cy="228" rx="23" ry="6" fill="#8f7968" opacity="0.7"/>
<ellipse cx="24" cy="236.5" rx="24" ry="2.2" fill="#362a23" opacity="0.8"/>
<ellipse cx="20" cy="252" rx="17" ry="7" fill="#77645a" opacity="0.8"/>
<ellipse cx="8" cy="270" rx="14" ry="9" fill="#3b2f28" opacity="0.75"/>
<ellipse cx="62" cy="261" rx="28" ry="10" fill="#4a3b32" opacity="0.7"/>
<ellipse cx="67" cy="272" rx="12" ry="7" fill="#6d5b4e" opacity="0.8"/>
<ellipse cx="92" cy="236" rx="8" ry="6" fill="#2e231c" opacity="0.8"/>
<ellipse cx="66" cy="249" rx="24" ry="4.5" fill="#3a2d25" opacity="0.7"/>
<ellipse cx="130" cy="228" rx="30" ry="4" fill="#93806e" opacity="0.6"/>
</g>
<g filter="url(#b1)">
<ellipse cx="111" cy="268.5" rx="23.5" ry="11.5" fill="#33221a"/>
<path d="M89 264c3-8 14-11.5 26-10 6 .8 10 2.5 12 5-10-2-24-1-38 5z" fill="#bd873a"/>
</g>
<!-- cup -->
<path d="M35.8 165.5h57.7l-3.8 14.5h-50.2z" fill="#cdbfa9" opacity="0.62"/>
<path d="M36.5 166.3h56.2" stroke="#f1ebe2" stroke-width="2" opacity="0.9" fill="none"/>
<path d="M39.5 179.5h50.2L84.5 240c-.3 3-3 5-6.5 5H51c-3.5 0-6-2-6.3-5z" fill="url(#liq)"/>
<path d="M39.5 179.5h50.2L84.5 240c-.3 3-3 5-6.5 5H51c-3.5 0-6-2-6.3-5z" fill="url(#liqv)"/>
<path d="M41 183.5c10-1.5 36-1.5 47 0" stroke="#5a3712" stroke-width="3.2" fill="none" opacity="0.75" filter="url(#b1)"/>
<path d="M45 188.5c8 1.5 16 1.5 22 3" stroke="#7d5019" stroke-width="1.6" fill="none" opacity="0.8" filter="url(#b1)"/>
<ellipse cx="80" cy="215" rx="5" ry="22" fill="#f0c468" opacity="0.35" filter="url(#b2)"/>
<rect x="67.5" y="180" width="6" height="40" fill="#b07422" opacity="0.45" filter="url(#b1)"/>
<rect x="66.3" y="124.7" width="6.3" height="55.5" rx="1.2" fill="#c8aa84"/>
<rect x="66.3" y="124.7" width="2.2" height="55.5" rx="1" fill="#dcc8a8" opacity="0.8"/>
</g>
</svg>
<div class="t " style="left:19px;top:478.7px;font-size:9.9px;color:#8190a5;">image/jpeg</div>
<div class="t " style="left:73.6px;top:479.4px;font-size:9.2px;color:#8190a5;">184.47 KB</div>
<div class="t b" style="left:13px;top:510px;font-size:12.4px;color:#b4bfcd;">Properties</div>
<div style="left:13px;top:532px;width:341px;height:1px;background:#2b384b;"></div>
<div style="left:69px;top:532px;width:1px;height:50px;background:#2b384b;"></div>
<div class="t " style="left:16.6px;top:541.5px;font-size:9.9px;color:#a5b1c2;">href</div>
<div class="t " style="left:78.3px;top:540.5px;font-size:9.68px;color:#f1f5f9;">https://images.unsplash.com/photo-1643508543350-2c2b679f3</div>
<div class="t " style="left:78.3px;top:555.75px;font-size:9.68px;color:#f1f5f9;">04b?crop=entropy&amp;cs=tinysrgb&amp;fit=max&amp;fm=jpg&amp;ixid=MnwyOT</div>
<div class="t " style="left:78.3px;top:571px;font-size:9.68px;color:#f1f5f9;letter-spacing:-0.3px">Y3MDN8MHwxfGFsbHw0fHx8fHx8Mnx8MTY0MzcxOTczNA&amp;ixlib=</div>
</div>
</div></div>
<svg style="left:761.5px;top:708.5px" width="39.5" height="32" viewBox="0 0 40 32"><g fill="#fff" fill-opacity="0.8"><path d="M14.5 0.8C7 0.8 1 5.8 1 12c0 3.5 1.9 6.6 4.9 8.7l-1.3 4 4.6-2.4c1.6.5 3.4.8 5.3.8h.8a9.3 9.3 0 0 1-.4-2.7c0-5.7 5.5-10.3 12.2-10.3h.8C26.8 4.7 21.2.8 14.5.8z"/><path d="M39 20.6c0-5-5-9-11.1-9s-11.1 4-11.1 9 5 9 11.1 9c1.4 0 2.7-.2 3.9-.6l3.7 2-1.1-3.3c2.8-1.6 4.6-4.2 4.6-7.1z"/></g><g fill="#d8d8d8" fill-opacity="0.9"><circle cx="10" cy="8.6" r="1.6"/><circle cx="18.6" cy="8.6" r="1.6"/><circle cx="24.2" cy="17.8" r="1.4"/><circle cx="31.6" cy="17.8" r="1.4"/></g></svg>
<div class="t" style="left:809.5px;top:711.5px;font-family:'Liberation Sans','Noto Sans CJK SC',sans-serif;font-size:30px;color:rgba(255,255,255,0.8);letter-spacing:0.25px;text-shadow:0 0 2px rgba(0,0,0,0.14);-webkit-text-stroke:0.5px rgba(255,255,255,0)">公众号 · IceSky</div>
</body>
</html>
